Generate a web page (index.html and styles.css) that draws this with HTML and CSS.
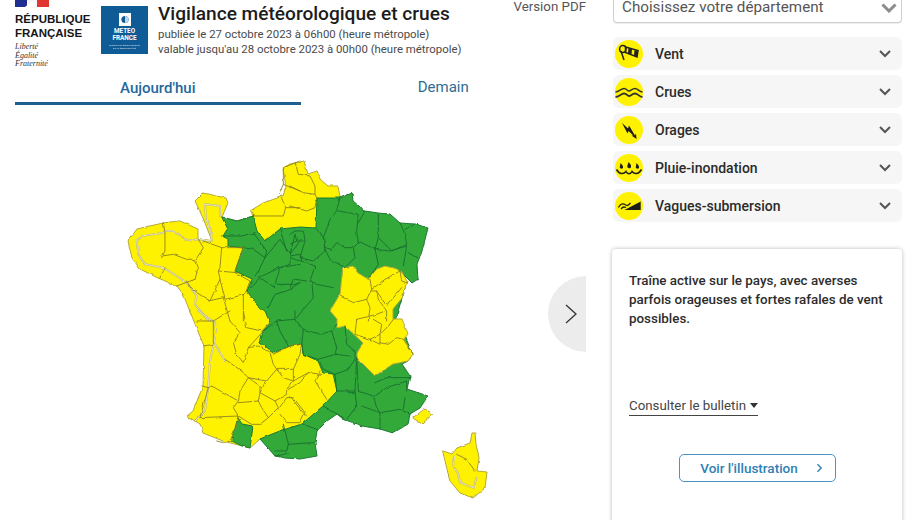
FILE: index.html
```html
<!DOCTYPE html>
<html lang="fr">
<head>
<meta charset="utf-8">
<title>Vigilance météorologique et crues</title>
<link rel="stylesheet" href="styles.css">
</head>
<body>
<div class="page">
  <main class="left">
    <header class="head">
      <div class="rf">
        <svg class="flag" viewBox="0 0 34 7" width="34" height="7"><rect width="12" height="7" fill="#1f2f8f"/><rect x="12" width="10" height="7" fill="#f4f4f8"/><rect x="22" width="12" height="7" fill="#e1362f"/><path d="M10 7 L17 1 L22 2 L19 7Z" fill="#fff"/></svg>
        <div class="rf-name">RÉPUBLIQUE<br>FRANÇAISE</div>
        <div class="rf-motto">Liberté<br>Égalité<br>Fraternité</div>
      </div>
      <div class="mf">
        <svg class="mf-mark" viewBox="0 0 12 13" width="12" height="13"><rect width="12" height="13" fill="#fff"/><circle cx="6" cy="6.5" r="3.6" fill="#0f5b96"/><path d="M6 3 A3.5 3.5 0 0 1 6 10Z" fill="#bcd4e6"/></svg>
        <div class="mf-name">METEO<br>FRANCE</div>
        <div class="mf-tag">Toujours un temps d'avance<br>sur le temps qu'il fait</div>
      </div>
      <div class="titles">
        <h1>Vigilance météorologique et crues</h1>
        <p>publiée le 27 octobre 2023 à 06h00 (heure métropole)</p>
        <p>valable jusqu'au 28 octobre 2023 à 00h00 (heure métropole)</p>
      </div>
      <a class="pdf">Version PDF</a>
    </header>
    <nav class="tabs">
      <div class="tab active">Aujourd'hui</div>
      <div class="tab">Demain</div>
    </nav>
    <div class="stage">
      <svg class="map" viewBox="0 0 586 416" width="586" height="416">
        <defs><filter id="wob" x="-5%" y="-5%" width="110%" height="110%"><feTurbulence type="fractalNoise" baseFrequency="0.14" numOctaves="2" seed="4" result="n"/><feDisplacementMap in="SourceGraphic" in2="n" scale="2.600" xChannelSelector="R" yChannelSelector="G"/><feGaussianBlur stdDeviation="0.3"/></filter></defs>
        <g transform="translate(0 -104)" filter="url(#wob)" stroke-linejoin="round" stroke-linecap="round" fill="none">
          <path class="y" d="M180 220 198 228 198 238 200 238 212 240 203 217 195 200 203 192 226 197 228 202 222 216 237 220 253 215 250 210 263 202 283 195 286 186 283 167 290 163 304 160 308 173 317 170 320 178 328 185 338 185 340 196 345 300 337 400 323 405 302 423 280 430 260 438 250 447 223 440 203 432 200 423 187 415 193 410 203 385 204 345 195 323 183 293 177 285 158 277 140 268 132 257 128 240 137 228 163 222Z"/>
          <path class="g" d="M222 216 237 220 253 215 257 230 265 240 280 228 300 226 316 227 317 197 340 197 352 192 353 200 365 210 378 212 390 213 400 222 415 223 428 227 422 250 417 263 418 278 412 282 403 273 405 287 402 297 395 320 405 335 412 352 408 360 402 363 410 375 407 388 428 395 420 407 410 413 408 423 393 432 380 428 362 425 343 418 337 413 327 420 317 430 315 442 317 455 300 458 285 457 275 455 260 438 280 430 302 423 323 405 337 390 333 373 323 372 318 360 303 353 302 343 290 345 273 352 260 342 263 330 270 322 265 310 260 308 247 290 252 278 235 270 243 247 228 245 228 238 222 235 227 227Z"/>
          <path class="y" d="M343 267 353 265 358 272 368 278 377 268 385 265 397 268 403 273 407 280 405 287 402 297 393 308 393 318 402 318 408 333 404 338 413 353 408 360 393 363 375 375 357 357 357 352 363 342 345 325 337 327 337 318 330 310 340 293Z"/>
          <path class="g" d="M238 417 242 423 253 425 250 447 242 445 232 440Z"/>
          <path class="y" d="M425 408 433 413 422 423 413 417Z"/>
          <path class="y" d="M443 450 452 453 457 447 470 442 472 432 475 432 476 443 479 457 477 470 487 471 485 487 473 497 460 492 450 480Z"/>
          <g transform="translate(120 150) scale(.33333)">
            <path class="cw" d="M50 270 65 255 130 245 135 240 165 240 200 270 235 265 275 270M50 270 55 310 75 340 130 350 170 375 200 395 230 435 225 460 250 490 265 510M255 160 258 205 272 235 275 265M255 160 300 165 300 195"/>
            <path class="ce" d="M50 270 65 255 130 245 135 240 165 240 200 270 235 265 275 270M50 270 55 310 75 340 130 350 170 375 200 395 230 435 225 460 250 490 265 510M255 160 258 205 272 235 275 265M255 160 300 165 300 195"/>
            <path class="ly" d="M130 215 135 245 135 300 125 320M235 265 250 290 225 330M125 315 160 310 200 325 225 325 235 350 225 385M120 380 135 350M250 270 305 290 300 350 295 360 350 365M225 385 170 405M295 360 300 385 270 450 215 415 200 390M305 290 370 290 345 360M345 365 390 390 375 430 315 445 300 385M265 450 310 440 330 510M370 430 370 510M400 195 490 195 497 170 480 130M497 170 540 170M490 100 540 120M480 130 490 100 490 50 540 30"/>
            <path class="lg" d="M305 255 365 255 405 245M370 290 400 295 435 320 415 360 405 375M400 245 440 300 435 320M435 320 480 265 510 310 510 340 480 350 415 380M480 235 500 300M525 250 510 310M540 270 510 310M540 340 480 350 465 400 525 400 540 395M540 395 500 420 465 430 445 470M380 420 420 380 465 410"/>
          </g>
          <g transform="translate(290 150) scale(.33333)">
            <path class="ly" d="M0 105 40 125 75 130 80 140M15 35 25 70 60 75 75 105 75 130M0 165 50 180 75 170 80 140M240 385 245 415 285 385 330 360M245 415 230 445 190 455 150 435M245 420 260 420 290 465 335 410M230 445 240 470 235 510M260 420 265 445 290 480 290 510M330 360 335 390 350 395"/>
            <path class="lg" d="M150 140 140 180 120 205 100 260 105 290 125 295 140 275 165 290 190 290 205 275 200 240 205 190 145 180M225 180 205 215M265 190 265 260 255 295 205 270M330 215 345 250 350 280 305 300 265 260M345 235 375 220M350 285 340 345M255 295 300 300 350 285M255 295 265 340 235 385M190 290 195 320 165 350 120 325 105 295M355 305 380 320M0 250 15 240 40 240 45 270 30 320 70 330 105 300 100 260 80 235M15 250 20 270 40 270M0 280 20 270M0 315 30 310 35 330M0 320 50 335 75 345 60 390 80 400 130 410M65 390 70 440 20 500M10 385 0 410M15 385 50 390"/>
          </g>
          <g transform="translate(180 310) scale(.33333)">
            <path class="cw" d="M55 0 105 35 108 65 90 150 85 225 75 300 45 330M105 100 135 150"/>
            <path class="ce" d="M55 0 105 35 108 65 90 150 85 225 75 300 45 330M105 100 135 150"/>
            <path class="ly" d="M50 30 100 30 150 0M100 30 100 100 70 105M150 30 180 65 160 95 170 130 190 155 205 110 250 60M190 0 200 50 245 60 270 35M185 180 205 200 180 240 175 270 140 250 95 225 85 230M185 180 135 145M205 110 235 105 270 125 280 160 290 175 260 210 205 200M280 130 330 105 365 100 360 130 340 175 290 175M340 175 340 210 385 185 425 190M420 180 405 210 440 265M385 185 360 215 325 235M330 255 365 300 380 315M290 175 310 200 340 210 320 235 320 250 285 270 240 245 255 215 260 210M205 200 240 225 240 245 235 270 175 275M235 270 245 290 265 320 240 340 215 340 175 315 160 290 175 270M285 270 295 290 265 320M295 295 320 260 340 260 375 305 360 335 320 335 300 310M65 225 85 230 60 320 175 315M175 315 170 345 150 390 130 395 110 390M530 25 590 10 615 0M530 25 525 70 570 85 600 70 605 40 580 25M605 65 625 45 640 25M600 95 625 100 650 80 670 85 700 130M600 70 600 100 570 85"/>
            <path class="lg" d="M345 0 345 25 370 55M290 30 300 60 325 105M290 30 345 25M250 60 290 30M370 55 365 100 370 130 415 145 465 130 470 110 455 60 470 40M370 55 420 70 455 60M495 45 500 100 525 120 525 145 505 175 465 190 430 175 415 145M465 130 510 135M530 140 525 240 470 240 465 190M525 240 530 285 500 325M530 140 535 240 580 255 590 290 600 305 600 355M545 285 600 305 660 295 690 310M585 215 620 200 690 200M620 230 585 255M620 230 680 210 680 240M675 260 670 295M430 285 490 320M500 245 525 245M370 340 410 355M310 340 325 400 320 420 285 420M325 400 400 395M285 435 310 430 325 425"/>
            <path class="ly" d="M830 430 860 445 885 480"/>
            <path class="cw" d="M820 435 820 465 835 490 840 515 880 530 890 500"/>
            <path class="ce" d="M820 435 820 465 835 490 840 515 880 530 890 500"/>
          </g>
        </g>
      </svg>
      <button class="next"><svg viewBox="0 0 14 22" width="14" height="22"><path d="M2 2 12 11 2 20" fill="none" stroke="#333" stroke-width="1.3"/></svg></button>
    </div>
  </main>
  <aside class="right">
    <div class="select"><span>Choisissez votre département</span><svg viewBox="0 0 16 10" width="16" height="10"><path d="M1.5 1.5 8 8 14.5 1.5" fill="none" stroke="#8c8c8c" stroke-width="3"/></svg></div>
    <ul class="risks">
      <li class="risk"><svg class="ico" viewBox="0 0 28 28"><circle cx="14" cy="14" r="14" fill="#fff200"/><g fill="none" stroke="#222" stroke-width="1.500"><ellipse cx="7.800" cy="9" rx="3.200" ry="3.400"/><path d="M6 11 9 20"/><path d="M10.500 7 23 10.500 22 17 10.500 12.500Z"/></g><path d="M13.500 8 17 9 16.500 14.500 13 13ZM19.500 10 22.500 11 21.800 16.500 19 15.500Z" fill="#222"/></svg><span>Vent</span><svg class="chev" viewBox="0 0 12 8" width="12" height="8"><path d="M1 1 6 6 11 1" fill="none" stroke="#555" stroke-width="2"/></svg></li>
      <li class="risk"><svg class="ico" viewBox="0 0 28 28"><circle cx="14" cy="14" r="14" fill="#fff200"/><g fill="none" stroke="#333"><path stroke-width="1.400" d="M0.500 14C4 14 6 10.500 9 10.500S12 13 14 13 17 10.500 20 10.500 24 14 27.500 14"/><path stroke-width="1.800" d="M0.500 19C4 19 6 15.500 9 15.500S12 18 14 18 17 15.500 20 15.500 24 19 27.500 19"/></g></svg><span>Crues</span><svg class="chev" viewBox="0 0 12 8" width="12" height="8"><path d="M1 1 6 6 11 1" fill="none" stroke="#555" stroke-width="2"/></svg></li>
      <li class="risk"><svg class="ico" viewBox="0 0 28 28"><circle cx="14" cy="14" r="14" fill="#fff200"/><path d="M7 7 13 12.500 14 9.500 20 19.500 21 17.500 21.500 23 16.500 19.500 18.300 19.500 13.500 15 12.500 17.500Z" fill="#1c1c1c"/></svg><span>Orages</span><svg class="chev" viewBox="0 0 12 8" width="12" height="8"><path d="M1 1 6 6 11 1" fill="none" stroke="#555" stroke-width="2"/></svg></li>
      <li class="risk"><svg class="ico" viewBox="0 0 28 28"><circle cx="14" cy="14" r="14" fill="#fff200"/><path d="M5.500 9C7 11 8.500 12 8 13.800 7.500 15.300 5 15 4.800 13.300 4.700 12 5.500 10.500 5.500 9ZM13.500 8C15.500 10 16.500 11.500 16 13 15.500 14.800 12.800 14.600 12.300 12.800 12.100 11.300 13.300 10 13.500 8ZM21.500 9C23 11 24.500 12 24 13.800 23.500 15.300 21 15 20.800 13.300 20.700 12 21.500 10.500 21.500 9Z" fill="#1c1c1c"/><g fill="none" stroke="#222" stroke-width="1.600"><path d="M1.500 15.500C4.500 20.500 8.500 20.500 11 17.500 12.500 20.500 15.500 20.500 17 17.500 19.500 20.500 23.500 20.500 26.500 15.500"/></g></svg><span>Pluie-inondation</span><svg class="chev" viewBox="0 0 12 8" width="12" height="8"><path d="M1 1 6 6 11 1" fill="none" stroke="#555" stroke-width="2"/></svg></li>
      <li class="risk"><svg class="ico" viewBox="0 0 28 28"><circle cx="14" cy="14" r="14" fill="#fff200"/><path d="M9.500 18 25.700 9.500 25.700 18Z" fill="#1c1c1c"/><g fill="none" stroke="#222" stroke-width="1.300"><path d="M3.500 15.500C5 12 8 11 10 12.500S13 14 15.500 11"/><path d="M6 17C7.500 15 9 14.500 11 15.500"/></g></svg><span>Vagues-submersion</span><svg class="chev" viewBox="0 0 12 8" width="12" height="8"><path d="M1 1 6 6 11 1" fill="none" stroke="#555" stroke-width="2"/></svg></li>
    </ul>
    <section class="card">
      <p class="msg">Traîne active sur le pays, avec averses parfois orageuses et fortes rafales de vent possibles.</p>
      <a class="bulletin">Consulter le bulletin <svg viewBox="0 0 8 5" width="8" height="5"><path d="M0 0H8L4 5Z" fill="#333"/></svg></a>
      <a class="illus">Voir l'illustration <svg viewBox="0 0 8 12" width="7" height="10"><path d="M1.500 1.500 6 6 1.500 10.500" fill="none" stroke="#3a86b7" stroke-width="1.800"/></svg></a>
    </section>
  </aside>
</div>
</body>
</html>
```

FILE: styles.css
```css
* { box-sizing: border-box; }
html, body { margin: 0; padding: 0; background: #fff; }
body { width: 912px; height: 520px; overflow: hidden; font-family: Roboto, "Liberation Sans", sans-serif; color: #2b2b2b; }
.page { display: flex; gap: 27px; padding-left: 15px; height: 520px; }
.left { width: 571px; flex: none; }
.right { width: 289px; flex: none; }

.head { display: flex; height: 70px; position: relative; }
.rf { width: 86px; flex: none; }
.flag { display: block; }
.rf-name { font: bold 11.500px/14px "Liberation Sans", sans-serif; color: #161616; margin-top: 5px; }
.rf-motto { font: italic 8px/8.500px "Liberation Serif", serif; color: #333; margin-top: 3px; }
.mf { width: 47px; height: 48px; margin-top: 6px; background: #0f5b96; flex: none; color: #fff; text-align: center; padding-top: 7px; }
.mf-mark { display: block; margin: 0 auto 2px; }
.mf-name { font: bold 6.400px/7px Roboto, sans-serif; }
.mf-tag { font: 2.500px/3px Roboto, sans-serif; margin-top: 2px; opacity: .85; }
.titles { margin-left: 10px; flex: none; width: 340px; }
h1 { margin: 3px 0 0; font: 500 19.100px/21px Roboto, sans-serif; color: #1c1c1c; }
.titles p { margin: 0; font: 11.400px/15px Roboto, sans-serif; color: #4a4a4a; }
.titles h1 + p { margin-top: 3px; }
.pdf { position: absolute; right: 0; top: -1px; font: 13.300px/16px Roboto, sans-serif; color: #555; }

.tabs { display: flex; gap: 0; height: 35px; }
.tab { width: 286px; text-align: center; font: 15px/35px Roboto, sans-serif; color: #2f6c94; padding-bottom: 0; height: 35px; }
.tab.active { font-weight: 500; color: #24689c; border-bottom: 3px solid #1d6090; line-height: 36px; margin-top: 0; }

.stage { height: 415px; position: relative; margin-left: -15px; }
.map { display: block; }
.map .y { fill: #fff200; stroke: #b3a83a; stroke-width: 1; }
.map .g { fill: #31a939; stroke: #1c7a30; stroke-width: 1; }
.map .ly { stroke: #8d8320; stroke-width: .9; vector-effect: non-scaling-stroke; }
.map .lg { stroke: #1a6d2e; stroke-width: .9; vector-effect: non-scaling-stroke; }
.map .cw { stroke: #bdb77e; stroke-width: 2; vector-effect: non-scaling-stroke; }
.map .ce { stroke: #f3efc4; stroke-width: .8; vector-effect: non-scaling-stroke; }
.next { position: absolute; right: 0; top: 171px; width: 38px; height: 76px; padding: 0 0 0 8px; border: 0; border-radius: 38px 0 0 38px; background: #ececec; display: flex; align-items: center; justify-content: center; }

.select { height: 23px; border: 1px solid #cfcfcf; border-top: 0; border-radius: 0 0 4px 4px; display: flex; align-items: center; justify-content: space-between; padding: 0 4px 7px 8px; font: 15.200px/15px Roboto, sans-serif; color: #555; box-shadow: 0 1px 1px #eee; }
.risks { list-style: none; margin: 14px 0 0; padding: 0; display: flex; flex-direction: column; gap: 5px; }
.risk { height: 33px; background: #f6f6f6; border-radius: 6px; display: flex; align-items: center; padding: 0 11px 0 2px; font: 500 14px/16px Roboto, sans-serif; color: #2b2b2b; }
.ico { width: 28px; height: 28px; flex: none; margin-right: 12px; }
.chev { margin-left: auto; }

.card { margin-top: 27px; height: 290px; margin-left: -1px; width: 290px; background: #fff; border-radius: 4px 4px 0 0; box-shadow: 0 0 4px rgba(0,0,0,.28); padding: 22px 17px 0; display: flex; flex-direction: column; }
.msg { margin: 0; font: 500 13.400px/19px Roboto, sans-serif; color: #2d2d2d; height: 57px; }
.bulletin { margin-top: 68px; align-self: flex-start; font: 13.300px/19px Roboto, sans-serif; color: #444; border-bottom: 1px solid #444; display: flex; align-items: center; gap: 4px; }
.illus { margin: 38px 0 0 50px; width: 157px; height: 28px; border: 1px solid #4c94bd; border-radius: 5px; padding: 0 0 1px 8px; display: flex; align-items: center; justify-content: center; gap: 18px; font: 500 13.500px/16px Roboto, sans-serif; color: #2f80b5; }
```
